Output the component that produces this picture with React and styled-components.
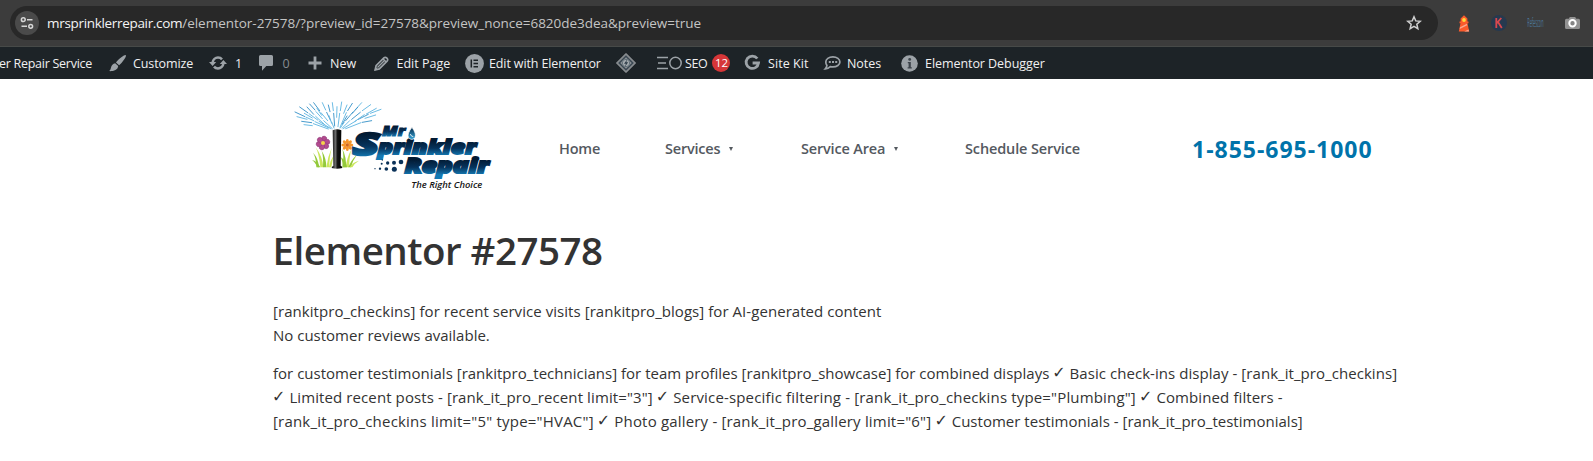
import React from "react";
import styled, { createGlobalStyle } from "styled-components";

const GlobalStyle = createGlobalStyle`
  * { box-sizing: border-box; }
  body { margin: 0; background: #fff; overflow: hidden; font-family: "Open Sans", "Noto Sans", sans-serif; }
`;

const Page = styled.div`
  width: 1593px;
  height: 461px;
  overflow: hidden;
  background: #fff;
`;

/* Browser toolbar */
const Toolbar = styled.div`
  height: 47px;
  display: flex;
  align-items: flex-start;
  padding: 6px 13px 0 10px;
  background: #3c3c3c;
  border-bottom: 1px solid #474a48;
`;
const AddressBar = styled.div`
  width: 1428px;
  height: 34px;
  border-radius: 17px;
  background: #282828;
  display: flex;
  align-items: center;
  padding: 0 16px 0 5px;
`;
const SiteInfo = styled.div`
  width: 24px;
  height: 24px;
  border-radius: 50%;
  background: #4a4a4a;
  display: flex;
  align-items: center;
  justify-content: center;
  margin-right: 8px;
`;
const Url = styled.div`
  flex: 1;
  font-size: 13.5px;
  line-height: 20px;
  white-space: nowrap;
  color: #c4c4c4;
  letter-spacing: -0.02px;
`;
const Host = styled.span`
  color: #f4f4f4;
  letter-spacing: -0.32px;
`;
const Extensions = styled.div`
  height: 34px;
  margin-left: 20px;
  display: flex;
  align-items: center;
  justify-content: space-between;
  flex: 1;
`;

/* WordPress admin bar */
const AdminBar = styled.div`
  height: 32px;
  display: flex;
  background: #1d2327;
  color: #f0f0f1;
  font-size: 12.5px;
  line-height: 32px;
`;
const AdminItem = styled.div`
  width: ${(p) => p.$width}px;
  height: 32px;
  flex: none;
  display: flex;
  align-items: center;
  white-space: nowrap;
  letter-spacing: ${(p) => p.$tracking || 0}px;
  color: ${(p) => (p.$muted ? "#868b90" : "inherit")};
`;
const SiteName = styled(AdminItem)`
  justify-content: flex-end;
  padding-right: 17px;
`;
const Label = styled.span`
  height: 32px;
  line-height: 33px;
`;
const IconSlot = styled.span`
  width: ${(p) => p.$width}px;
  height: 32px;
  flex: none;
  display: flex;
  align-items: center;
  color: #9ca2a7;
  svg { display: block; overflow: visible; }
`;
const Badge = styled.span`
  width: 18px;
  height: 18px;
  margin-left: 5px;
  border-radius: 50%;
  background: #d63638;
  color: #fff;
  font-size: 11.5px;
  line-height: 18px;
  text-align: center;
  letter-spacing: -0.2px;
`;

/* Site header */
const SiteHeader = styled.header`
  height: 139px;
  display: flex;
  align-items: center;
  padding-left: 279px;
`;
const LogoLink = styled.div`
  width: 280px;
  height: 117px;
  svg { display: block; }
`;
const Nav = styled.nav`
  width: 633px;
  display: flex;
  color: #54595f;
  font-size: 14.5px;
  font-weight: 600;
  line-height: 24px;
`;
const NavItem = styled.div`
  width: ${(p) => p.$width}px;
  display: flex;
  align-items: center;
  white-space: nowrap;
  letter-spacing: ${(p) => p.$tracking}px;
`;
const Caret = styled.i`
  width: 0;
  height: 0;
  margin: 0 0 0 8.5px;
  border: 2.5px solid transparent;
  border-top: 4.5px solid #54595f;
  border-bottom: 0;
`;
const Phone = styled.div`
  color: #0073aa;
  font-size: 23px;
  font-weight: 700;
  line-height: 30px;
  letter-spacing: 0.98px;
  padding-top: 1px;
`;

/* Page content */
const Main = styled.main`
  padding: 8px 0 0 273px;
  color: #333;
`;
const Title = styled.h1`
  margin: 0 0 25px -0.5px;
  font-size: 38.5px;
  font-weight: 600;
  line-height: 48px;
  letter-spacing: -0.5px;
`;
const Paragraph = styled.p`
  margin: 0 0 14px;
  font-size: 15px;
  line-height: 24px;
`;
const Line = styled.span`
  display: block;
  height: 24px;
  white-space: pre;
`;
const Run = styled.span`
  letter-spacing: ${(p) => p.$tracking || 0}px;
`;
const CheckMark = styled.span`
  display: inline-block;
  width: 12.4px;
  height: 24px;
  vertical-align: top;
  font-family: "DejaVu Sans", sans-serif;
  font-size: 16px;
  text-indent: -1px;
  letter-spacing: -1px;
`;
const Check = () => <CheckMark>✓</CheckMark>;

const TuneIcon = () => (
  <svg width="14" height="14" viewBox="0 0 14 14" fill="none" stroke="#d6d6d6" strokeWidth="1.5">
    <circle cx="3.3" cy="3.7" r="1.9" />
    <path d="M7 3.7h5.5M1.5 10.3H7" />
    <circle cx="10.7" cy="10.3" r="1.9" />
  </svg>
);
const StarIcon = () => (
  <svg width="16" height="16" viewBox="0 0 16 16" fill="none" stroke="#d0d0d0" strokeWidth="1.5">
    <path d="M8 1.8l1.75 4.1 4.45.4-3.37 2.94 1 4.36L8 11.3l-3.83 2.3 1-4.36L1.8 6.3l4.45-.4z" />
  </svg>
);
const LighthouseIcon = () => (
  <svg width="12" height="17" viewBox="0 0 12 17">
    <path d="M2.6 3.4L6 .3l3.400 3.100v3.100h1.100v1.800h-1l1.700 8.200H.8l1.700-8.200h-1V6.500h1.100z" fill="#fb5a2b" />
    <path d="M2 12.200l6.900-3.400.3 1.500-7.500 3.600zM6.200 16.500l4.400-2.100.3 2.100z" fill="#f9a78f" />
    <circle cx="6" cy="5" r="1.900" fill="#ffd93b" />
  </svg>
);
const KIcon = () => (
  <svg width="16" height="16" viewBox="0 0 16 16">
    <circle cx="8" cy="8" r="8" fill="#26394f" />
    <path d="M5.300 3v10M10.300 3L5.800 8.200M7 7l3.800 6" stroke="#d8484f" strokeWidth="1.800" fill="none" />
  </svg>
);
const WordmarkIcon = () => (
  <svg width="17" height="18" viewBox="0 0 17 18">
    <text x="0.300" y="13" fontFamily="Open Sans, sans-serif" fontSize="12" fill="#4d7799" textLength="16.200" lengthAdjust="spacingAndGlyphs">Refescon</text>
  </svg>
);
const CameraIcon = () => (
  <svg width="15" height="14" viewBox="0 0 15 14">
    <path d="M4.800 1h5.400l1 1.800h2.300A1.500 1.500 0 0 1 15 4.300v7.200a1.500 1.500 0 0 1-1.500 1.500h-12A1.500 1.500 0 0 1 0 11.500V4.300a1.500 1.500 0 0 1 1.500-1.500h2.300z" fill="#929292" />
    <circle cx="7.500" cy="7.300" r="3.200" fill="#858585" stroke="#fff" strokeWidth="2" />
  </svg>
);

const BrushIcon = () => (
  <svg width="17" height="17" viewBox="0 0 17 17" fill="currentColor">
    <path d="M16.800.2c.5.600-.4 2.400-1.700 4.400-1.600 2.300-3.700 5-5 5.600L7 7.500C7.800 6 10.600 3.500 12.700 2 14.600.7 16.300-.3 16.800.2zM6.200 8.200l3 2.700c-.2 2-1.200 3.200-2.800 4.100C4.500 16 2 16.300 0 16.100c1.300-.7 1.500-2 2-3.700.5-2 1.900-3.900 4.200-4.200z" />
  </svg>
);
const UpdateIcon = () => (
  <svg width="18" height="14" viewBox="0 0 18 14" fill="none" stroke="currentColor" strokeWidth="2.500">
    <path d="M3.600 6.500C4 3.600 6.300 1.600 9 1.600c1.600 0 3 .6 4 1.800M14.400 7.500C14 10.400 11.700 12.400 9 12.400c-1.600 0-3-.6-4-1.800" />
    <path d="M0 6h7.200L3.600 10zM10.800 8H18l-3.600-4z" fill="currentColor" stroke="none" />
  </svg>
);
const CommentIcon = () => (
  <svg width="14" height="16" viewBox="0 0 14 16" fill="currentColor">
    <path d="M1.500 0h11A1.500 1.500 0 0 1 14 1.500v8a1.500 1.500 0 0 1-1.500 1.500H7.300L3 15.700V11H1.500A1.500 1.500 0 0 1 0 9.500v-8A1.500 1.500 0 0 1 1.500 0z" />
  </svg>
);
const PlusIcon = () => (
  <svg width="14" height="14" viewBox="0 0 14 14" stroke="currentColor" strokeWidth="2.800">
    <path d="M7 .5v13M.5 7h13" />
  </svg>
);
const PencilIcon = () => (
  <svg width="15" height="15" viewBox="0 0 15 15" fill="none" stroke="currentColor">
    <path d="M1.200 13.800l.9-4.100 7.800-7.800c.8-.8 1.900-.8 2.700 0l.5.500c.8.8.8 1.900 0 2.700L5.300 12.900z" strokeWidth="1.700" />
    <path d="M3.500 11.500l7-7M9 2.800L12.200 6" strokeWidth="1.400" />
    <path d="M.5 14.500l1-3.500L4 13.500z" fill="currentColor" stroke="none" />
  </svg>
);
const ElementorIcon = () => (
  <svg width="19" height="19" viewBox="0 0 19 19">
    <circle cx="9.500" cy="9.500" r="9.400" fill="currentColor" />
    <path d="M6.300 5.500v8M8.500 6.200h4.500M8.500 9.500h4.500M8.500 12.800h4.500" stroke="#1d2327" strokeWidth="1.500" />
  </svg>
);
const DiamondIcon = () => (
  <svg width="20" height="20" viewBox="0 0 20 20" fill="none">
    <path d="M10 .5l9.500 9.500-9.500 9.500L.5 10z" fill="#777c80" stroke="#a4a8ab" />
    <path d="M10 3.300l6.700 6.700-6.700 6.700L3.300 10z" fill="#8b9094" stroke="#34424e" strokeWidth="1.200" />
    <circle cx="10" cy="10" r="3.700" fill="#a5abaf" stroke="#66737c" />
    <path d="M11.300 6.200L8 10.700h1.900L8.800 14l3.400-4.800h-1.900z" fill="#2f3e4a" />
  </svg>
);
const SeoIcon = () => (
  <svg width="25" height="14" viewBox="0 0 25 14" fill="none" stroke="currentColor" strokeWidth="1.500">
    <path d="M0 1.500h11M1 7h8M0 12.500h11" />
    <circle cx="18.500" cy="7" r="5.700" />
  </svg>
);
const GoogleIcon = () => (
  <svg width="15" height="16" viewBox="0 0 15 16" fill="none" stroke="currentColor" strokeWidth="2.800">
    <path d="M12.300 3.500A6.200 6.200 0 1 0 13.500 8H7.600" />
  </svg>
);
const NotesIcon = () => (
  <svg width="17" height="14" viewBox="0 0 17 14" fill="none" stroke="currentColor" strokeWidth="1.700">
    <path d="M8.900.9c4 0 7 2.200 7 5s-3 5-7 5c-.9 0-1.800-.1-2.600-.3-1.200 1.300-2.900 2.200-5 2.200.9-.9 1.500-2 1.600-3.400C2 8.400 1.800 7.200 1.800 5.900c0-2.800 3-5 7.100-5z" />
    <path d="M4.800 6h2M8 6h2M11.200 6h2" strokeWidth="2" />
  </svg>
);
const InfoIcon = () => (
  <svg width="17" height="17" viewBox="0 0 17 17">
    <circle cx="8.500" cy="8.500" r="8.300" fill="currentColor" />
    <circle cx="8.700" cy="4.400" r="1.400" fill="#3c434a" />
    <path d="M6.800 7h3v5.200h1v1.200H6.600v-1.200h1V8.200h-.8z" fill="#3c434a" />
  </svg>
);

/* Water streaks: [x1, y1, x2, y2] */
const streaks = [
  [48, 66, 78, 80], [82, 82, 104, 92], [108, 95, 150, 114], [62, 51, 86, 68], [90, 71, 116, 90], [120, 94, 156, 116],
  [92, 42, 108, 60], [111, 65, 130, 86], [134, 92, 160, 116], [104, 38, 122, 62], [126, 68, 146, 92], [130, 38, 140, 60],
  [143, 67, 154, 90], [158, 96, 165, 114], [160, 38, 163, 62], [164, 70, 167, 108], [188, 36, 184, 62], [182, 70, 177, 110],
  [220, 40, 206, 62], [202, 68, 183, 112], [248, 38, 228, 60], [222, 66, 200, 92], [196, 96, 184, 114], [275, 44, 250, 62],
  [244, 67, 218, 88], [212, 92, 190, 114], [306, 58, 274, 70], [268, 73, 238, 88], [232, 92, 192, 116], [290, 75, 258, 85],
  [278, 92, 250, 97], [246, 98, 200, 116], [54, 80, 84, 88], [68, 94, 98, 98], [103, 101, 148, 117], [75, 104, 100, 107],
  [84, 51, 104, 73], [110, 79, 136, 103], [114, 55, 128, 76], [148, 45, 153, 65], [174, 50, 173, 82], [204, 45, 194, 70],
  [236, 52, 220, 70], [256, 74, 228, 94], [76, 70, 100, 84], [204, 78, 190, 102], [150, 77, 158, 100], [292, 55, 262, 72],
];
const blades = [
  "M112 232Q112 205 102 188Q118 204 120 232", "M124 232Q120 190 110 172Q130 198 133 232", "M132 232Q134 200 128 182Q142 204 142 232",
  "M142 232Q146 200 158 174Q150 208 151 232", "M116 232Q106 214 99 210Q114 212 124 232", "M150 232Q154 210 164 196Q160 214 157 232",
  "M190 232Q196 198 190 176Q204 204 200 232", "M200 232Q204 202 216 180Q210 210 210 232", "M208 232Q216 210 234 194Q220 212 216 232",
  "M212 232Q222 216 240 212Q226 220 220 232", "M192 232Q190 208 184 200Q202 212 204 232",
];
const dots = [
  [288, 236, 2], [303, 236, 3.5], [322, 237, 5.5], [346, 238, 7.5], [308, 221, 3], [326, 219, 5], [345, 218, 6],
  [366, 216, 7], [310, 210, 2],
];
const flowerPetals = [0, 60, 120, 180, 240, 300];

const Logo = () => (
  <svg width="230" height="110" viewBox="0 0 690 330">
    <defs>
      <linearGradient id="navy" x1="0" y1="0" x2="0" y2="1">
        <stop offset="0.300" stopColor="#021a33" />
        <stop offset="0.580" stopColor="#06335c" />
        <stop offset="0.850" stopColor="#1379b3" />
      </linearGradient>
      <linearGradient id="water" x1="0" y1="0" x2="0" y2="1">
        <stop offset="0" stopColor="#052a4a" />
        <stop offset="1" stopColor="#37a8dc" />
      </linearGradient>
      <linearGradient id="pipe">
        <stop offset="0" stopColor="#000" />
        <stop offset="0.350" stopColor="#6c6c6c" />
        <stop offset="0.550" stopColor="#111" />
        <stop offset="1" stopColor="#000" />
      </linearGradient>
    </defs>
    <g strokeWidth="2.800" strokeLinecap="round">
      {streaks.map(([x1, y1, x2, y2], i) => (
        <line key={i} x1={x1} y1={y1} x2={x2} y2={y2} stroke={i % 3 ? "#62b7e2" : "#3a93c8"} />
      ))}
    </g>
    <g>
      {blades.map((d, i) => (
        <path key={d} d={d} fill={i % 2 ? "#cbe65c" : "#93c93a"} />
      ))}
    </g>
    <g transform="translate(132 159)">
      {flowerPetals.map((a) => (
        <ellipse key={a} cx="0" cy="-12" rx="8" ry="9" fill="#b24a8e" stroke="#8d3a78" strokeWidth="1.500" transform={`rotate(${a + 15})`} />
      ))}
      <circle r="6" fill="#f5d34a" />
    </g>
    <g transform="translate(205 165)">
      {[0, 45, 90, 135, 180, 225, 270, 315].map((a) => (
        <ellipse key={a} cx="0" cy="-11" rx="4.500" ry="7" fill="#f6952b" transform={`rotate(${a})`} />
      ))}
      <circle r="5" fill="#d4661c" />
    </g>
    <path d="M161 121q13-7 26 0l-2 106q6 3 5 7-16 4-32 0 0-4 5-7z" fill="url(#pipe)" />
    <g fontFamily="Open Sans, sans-serif" fontStyle="italic" fontWeight="800" fill="url(#navy)" stroke="url(#navy)" strokeLinejoin="miter">
      <text x="309" y="137" fontSize="43" strokeWidth="3" textLength="70" lengthAdjust="spacingAndGlyphs">Mr</text>
      <text x="222" y="194" fontSize="92" strokeWidth="8" textLength="78" lengthAdjust="spacingAndGlyphs">S</text>
      <text x="297" y="191" fontSize="60" strokeWidth="5.500" textLength="294" lengthAdjust="spacingAndGlyphs">prinkler</text>
      <text x="377" y="249" fontSize="63" strokeWidth="6" textLength="252" lengthAdjust="spacingAndGlyphs">Repair</text>
    </g>
    <path d="M399 112q14 20 9 30-9 13-20 0-4-11 11-30z" fill="url(#water)" stroke="#fff" strokeWidth="2" />
    <path d="M394 132q2 8 9 8" stroke="#fff" strokeWidth="2.500" fill="none" />
    <g fill="#0a3158">
      {dots.map(([cx, cy, r]) => (
        <circle key={`${cx}-${cy}`} cx={cx} cy={cy} r={r} />
      ))}
    </g>
    <text x="397" y="293" fontFamily="Open Sans, sans-serif" fontStyle="italic" fontWeight="600" fontSize="29" fill="#161616" textLength="213" lengthAdjust="spacingAndGlyphs">The Right Choice</text>
  </svg>
);

export default function App() {
  return (
    <Page>
      <GlobalStyle />
      <Toolbar>
        <AddressBar>
          <SiteInfo><TuneIcon /></SiteInfo>
          <Url><Host>mrsprinklerrepair.com</Host>/elementor-27578/?preview_id=27578&amp;preview_nonce=6820de3dea&amp;preview=true</Url>
          <StarIcon />
        </AddressBar>
        <Extensions>
          <LighthouseIcon />
          <KIcon />
          <WordmarkIcon />
          <CameraIcon />
        </Extensions>
      </Toolbar>
      <AdminBar>
        <SiteName $width={109} $tracking={-0.27}><Label>er Repair Service</Label></SiteName>
        <AdminItem $width={100} $tracking={-0.1}><IconSlot $width={24}><BrushIcon /></IconSlot><Label>Customize</Label></AdminItem>
        <AdminItem $width={50}><IconSlot $width={26}><UpdateIcon /></IconSlot><Label>1</Label></AdminItem>
        <AdminItem $width={49} $muted><IconSlot $width={23.5}><CommentIcon /></IconSlot><Label>0</Label></AdminItem>
        <AdminItem $width={66}><IconSlot $width={22}><PlusIcon /></IconSlot><Label>New</Label></AdminItem>
        <AdminItem $width={91}><IconSlot $width={22.5}><PencilIcon /></IconSlot><Label>Edit Page</Label></AdminItem>
        <AdminItem $width={151} $tracking={-0.12}><IconSlot $width={24}><ElementorIcon /></IconSlot><Label>Edit with Elementor</Label></AdminItem>
        <AdminItem $width={41}><IconSlot $width={20}><DiamondIcon /></IconSlot></AdminItem>
        <AdminItem $width={88} $tracking={-0.35}><IconSlot $width={28}><SeoIcon /></IconSlot><Label>SEO</Label><Badge>12</Badge></AdminItem>
        <AdminItem $width={79} $tracking={0.06}><IconSlot $width={23}><GoogleIcon /></IconSlot><Label>Site Kit</Label></AdminItem>
        <AdminItem $width={77} $tracking={-0.05}><IconSlot $width={23}><NotesIcon /></IconSlot><Label>Notes</Label></AdminItem>
        <AdminItem $width={150} $tracking={-0.06}><IconSlot $width={24}><InfoIcon /></IconSlot><Label>Elementor Debugger</Label></AdminItem>
      </AdminBar>
      <SiteHeader>
        <LogoLink><Logo /></LogoLink>
        <Nav>
          <NavItem $width={106} $tracking={-0.2}>Home</NavItem>
          <NavItem $width={136} $tracking={-0.2}>Services<Caret /></NavItem>
          <NavItem $width={164} $tracking={-0.18}>Service Area<Caret /></NavItem>
          <NavItem $width={120} $tracking={-0.13}>Schedule Service</NavItem>
        </Nav>
        <Phone>1-855-695-1000</Phone>
      </SiteHeader>
      <Main>
        <Title>Elementor #27578</Title>
        <Paragraph>
          <Line><Run $tracking={0.055}>[rankitpro_checkins] for recent service visits [rankitpro_blogs] for AI-generated content</Run></Line>
          <Line>No customer reviews available.</Line>
        </Paragraph>
        <Paragraph>
          <Line>
            <Run $tracking={0.01}>{"for customer testimonials [rankitpro_technicians] for team profiles [rankitpro_showcase] for combined displays "}</Run>
            <Check />
            <Run $tracking={0.055}>{" Basic check-ins display - [rank_it_pro_checkins]"}</Run>
          </Line>
          <Line>
            <Check />
            <Run $tracking={0.1}>{' Limited recent posts - [rank_it_pro_recent limit="3"] '}</Run>
            <Check />
            <Run $tracking={0.16}>{' Service-specific filtering - [rank_it_pro_checkins type="Plumbing"] '}</Run>
            <Check />
            <Run $tracking={0.11}>{" Combined filters -"}</Run>
          </Line>
          <Line>
            <Run $tracking={0.2}>{'[rank_it_pro_checkins limit="5" type="HVAC"] '}</Run>
            <Check />
            <Run $tracking={0.18}>{' Photo gallery - [rank_it_pro_gallery limit="6"] '}</Run>
            <Check />
            <Run $tracking={0.02}>{" Customer testimonials - [rank_it_pro_testimonials]"}</Run>
          </Line>
        </Paragraph>
      </Main>
    </Page>
  );
}
